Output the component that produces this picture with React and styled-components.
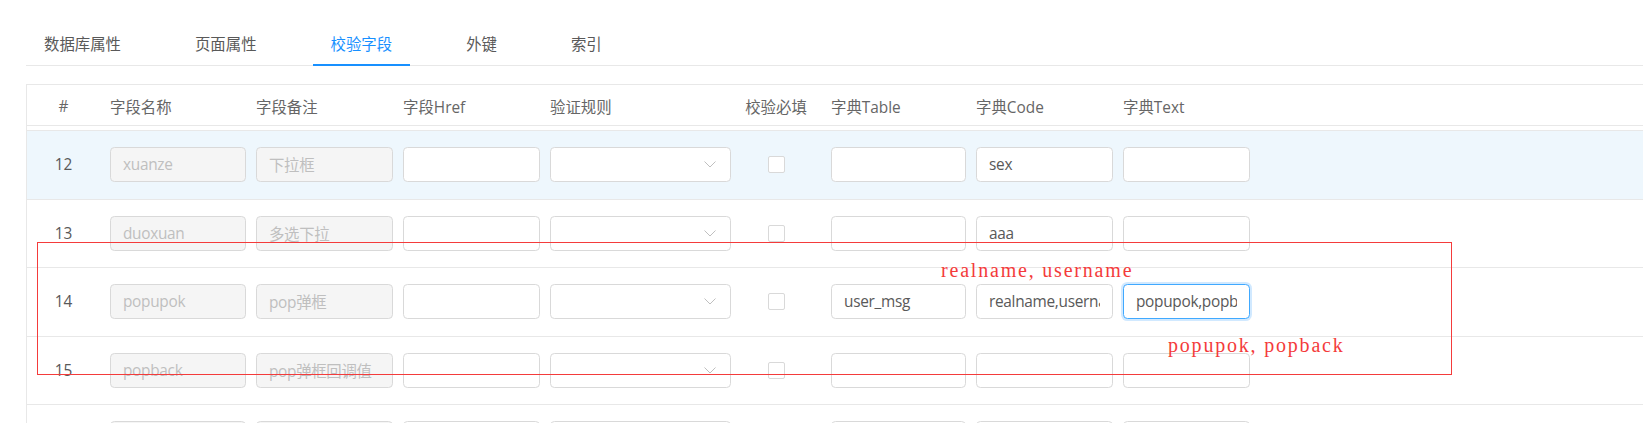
import styled, { createGlobalStyle, css } from 'styled-components'

const GlobalStyle = createGlobalStyle`
  html, body {
    margin: 0;
    padding: 0;
    background: #fff;
    overflow: hidden;
  }
  body {
    font-family: "Open Sans", "Noto Sans CJK SC", sans-serif;
    font-size: 15.4px;
    color: #595959;
  }
`

const tabs = ['数据库属性', '页面属性', '校验字段', '外键', '索引']
const columns = ['#', '字段名称', '字段备注', '字段Href', '验证规则', '校验必填', '字典Table', '字典Code', '字典Text']

const rows = [
  { no: 12, name: 'xuanze', remark: '下拉框', code: 'sex', active: true },
  { no: 13, name: 'duoxuan', remark: '多选下拉', code: 'aaa' },
  { no: 14, name: 'popupok', remark: 'pop弹框', table: 'user_msg', code: 'realname,username', text: 'popupok,popback', focus: true },
  { no: 15, name: 'popback', remark: 'pop弹框回调值' },
  { no: 16, name: '', remark: '' },
]

const Chevron = () => (
  <svg width="12" height="7" viewBox="0 0 12 7">
    <polyline points="0.5,0.5 6,6 11.5,0.5" fill="none" stroke="#bfbfbf" strokeWidth="1" />
  </svg>
)

const App = () => {
  return (
    <Page>
      <GlobalStyle />
      <TabBar>
        {tabs.map((t) => (
          <Tab key={t} $active={t === '校验字段'}>{t}</Tab>
        ))}
      </TabBar>

      <Table>
        <HeadRow>
          {columns.map((c, i) => (
            <HeadCell key={c} $center={i === 0 || i === 5}>{c}</HeadCell>
          ))}
        </HeadRow>
        <ScrolledEdge />
        {rows.map((r) => (
          <Row key={r.no} $active={r.active}>
            <NoCell>{r.no}</NoCell>
            <Input disabled value={r.name} readOnly />
            <Input disabled value={r.remark} readOnly />
            <Input value="" readOnly />
            <Select>
              <Chevron />
            </Select>
            <CheckCell>
              <Checkbox />
            </CheckCell>
            <Input value={r.table || ''} readOnly />
            <Input value={r.code || ''} readOnly />
            <Input value={r.text || ''} readOnly $focus={r.focus} />
          </Row>
        ))}
      </Table>

      <MarkBox />
      <Note style={{ left: 941, top: 257 }}>realname, username</Note>
      <Note style={{ left: 1168, top: 332 }}>popupok, popback</Note>
    </Page>
  )
}

export default App

const Page = styled.div`
  position: relative;
  height: 423px;
  padding: 34px 0 0 26px;
  box-sizing: border-box;
  overflow: hidden;
`

const TabBar = styled.div`
  display: flex;
  gap: 38px;
  border-bottom: 1px solid #e8e8e8;
`

const Tab = styled.div`
  position: relative;
  padding: 0 18px 9px;
  line-height: 22px;
  font-size: 15.4px;
  color: #595959;
  white-space: nowrap;

  ${(p) =>
    p.$active &&
    css`
      color: #1890ff;
      &::after {
        content: '';
        position: absolute;
        left: 0;
        right: 0;
        bottom: -1px;
        height: 2px;
        background: #1890ff;
      }
    `}
`

const Table = styled.div`
  margin-top: 18px;
  border-top: 1px solid #e8e8e8;
  border-left: 1px solid #e8e8e8;
`

const gridCols = css`
  display: grid;
  grid-template-columns: 73px 136px 137px 137px 181px 80px 135px 137px 127px;
  column-gap: 10px;
  align-items: center;
`

const HeadRow = styled.div`
  ${gridCols}
  height: 41px;
  padding-top: 2px;
  box-sizing: border-box;
  border-bottom: 1px solid #e8e8e8;
`

const HeadCell = styled.div`
  font-size: 15.4px;
  color: #666;
  white-space: nowrap;
  ${(p) =>
    p.$center &&
    css`
      text-align: center;
    `}
  &:nth-child(6) {
    padding-right: 10px;
  }
`

const ScrolledEdge = styled.div`
  height: 4px;
  border-bottom: 1px solid #e8e8e8;
`

const Row = styled.div`
  ${gridCols}
  height: 67.5px;
  border-bottom: 1px solid #e8e8e8;
  background: ${(p) => (p.$active ? '#eef7fd' : '#fff')};
`

const NoCell = styled.div`
  text-align: center;
  color: #595959;
`

const Input = styled.input`
  width: 100%;
  height: 35px;
  box-sizing: border-box;
  border: 1px solid #d9d9d9;
  border-radius: 4.4px;
  padding: 0 12px;
  font-family: "Open Sans", "Noto Sans CJK SC", sans-serif;
  font-size: 15.4px;
  letter-spacing: -0.3px;
  color: #595959;
  background: #fff;
  outline: none;

  &:disabled {
    background: #f5f5f5;
    color: #bfbfbf;
    -webkit-text-fill-color: #bfbfbf;
  }

  ${(p) =>
    p.$focus &&
    css`
      border-color: #40a9ff;
      box-shadow: 0 0 0 2px rgba(24, 144, 255, 0.2);
    `}
`

const Select = styled.div`
  height: 35px;
  box-sizing: border-box;
  border: 1px solid #d9d9d9;
  border-radius: 4.4px;
  background: #fff;
  display: flex;
  align-items: center;
  justify-content: flex-end;
  padding-right: 14px;
`

const CheckCell = styled.div`
  display: flex;
  justify-content: center;
  padding-right: 10px;
`

const Checkbox = styled.span`
  width: 17px;
  height: 17px;
  box-sizing: border-box;
  border: 1px solid #d9d9d9;
  border-radius: 2px;
  background: #fff;
`

const MarkBox = styled.div`
  position: absolute;
  left: 37px;
  top: 242px;
  width: 1415px;
  height: 133px;
  box-sizing: border-box;
  border: 1px solid #f43b3b;
  pointer-events: none;
`

const Note = styled.div`
  position: absolute;
  font-family: "Liberation Serif", serif;
  font-size: 20px;
  letter-spacing: 1.8px;
  line-height: 26px;
  color: #f43b3b;
  white-space: nowrap;
`
